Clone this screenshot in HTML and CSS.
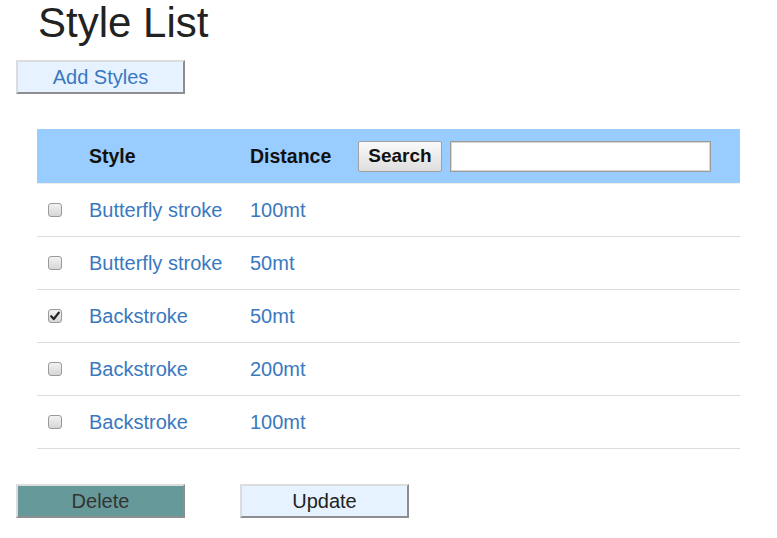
FILE: index.html
```html
<!DOCTYPE html>
<html>
<head>
<meta charset="utf-8">
<link rel="stylesheet" href="styles.css">
</head>
<body>
<div class="page">
  <h1 class="title">Style List</h1>
  <button class="btn btn-light add-btn">Add Styles</button>

  <div class="table">
    <div class="row head">
      <div class="cell"></div>
      <div class="cell">Style</div>
      <div class="cell">Distance</div>
      <div class="cell search-cell">
        <button class="search-btn">Search</button>
        <input class="search-input" type="text">
      </div>
    </div>
    <div class="row">
      <div class="cell"><span class="check"></span></div>
      <div class="cell link">Butterfly stroke</div>
      <div class="cell link">100mt</div>
      <div class="cell"></div>
    </div>
    <div class="row">
      <div class="cell"><span class="check"></span></div>
      <div class="cell link">Butterfly stroke</div>
      <div class="cell link">50mt</div>
      <div class="cell"></div>
    </div>
    <div class="row">
      <div class="cell"><span class="check checked"><svg viewBox="0 0 14 14" width="14" height="14"><path d="M3.2 7.2 L5.8 10 L10.8 3.6" fill="none" stroke="#222" stroke-width="2.2" stroke-linecap="round" stroke-linejoin="round"/></svg></span></div>
      <div class="cell link">Backstroke</div>
      <div class="cell link">50mt</div>
      <div class="cell"></div>
    </div>
    <div class="row">
      <div class="cell"><span class="check"></span></div>
      <div class="cell link">Backstroke</div>
      <div class="cell link">200mt</div>
      <div class="cell"></div>
    </div>
    <div class="row">
      <div class="cell"><span class="check"></span></div>
      <div class="cell link">Backstroke</div>
      <div class="cell link">100mt</div>
      <div class="cell"></div>
    </div>
  </div>

  <div class="actions">
    <button class="btn btn-delete">Delete</button>
    <button class="btn btn-light btn-update">Update</button>
  </div>
</div>
</body>
</html>
```

FILE: styles.css
```css
html, body {
  margin: 0;
  padding: 0;
  background: #fff;
}

body {
  font-family: "Liberation Sans", Arial, sans-serif;
  color: #222;
}

.page {
  display: flex;
  flex-direction: column;
  align-items: flex-start;
  padding-left: 16px;
}

.title {
  margin: 0 0 0 22px;
  padding-top: 2px;
  font-size: 42px;
  line-height: 42px;
  font-weight: normal;
  color: #222;
}

.btn {
  font-family: "Liberation Sans", Arial, sans-serif;
  font-size: 20px;
  width: 169px;
  height: 34px;
  padding: 0;
  border-style: solid;
  border-width: 2px 2px 2px 2px;
  border-color: #dcdcdc #8e8e8e #8e8e8e #dcdcdc;
  border-radius: 0;
  cursor: pointer;
}

.btn-light {
  background: #e6f2ff;
}

.add-btn {
  margin-top: 16px;
  color: #3a78c0;
}

.table {
  margin-top: 35px;
  margin-left: 21px;
  width: 703px;
}

.row {
  display: grid;
  grid-template-columns: 52px 161px 108px 1fr;
  height: 52px;
  align-items: center;
  border-bottom: 1px solid #dddddd;
  font-size: 20px;
}

.row.head {
  height: 54px;
  background: #99ccff;
  border-bottom: 1px solid #eeeeee;
  font-weight: bold;
  font-size: 19.5px;
  color: #111;
}

.cell {
  display: flex;
  align-items: center;
  white-space: nowrap;
}

.link {
  color: #3a78c0;
}

.check {
  display: block;
  box-sizing: border-box;
  width: 14px;
  height: 14px;
  margin-left: 11px;
  border: 1px solid #9a9a9a;
  border-radius: 3px;
  background: linear-gradient(#f2f2f2, #d6d6d6);
}

.check svg {
  display: block;
  margin: -1px 0 0 -1px;
}

.search-cell {
  gap: 8px;
}

.search-btn {
  font-family: "Liberation Sans", Arial, sans-serif;
  font-weight: bold;
  font-size: 19px;
  color: #111;
  width: 84px;
  height: 31px;
  padding: 0;
  border: 1px solid #a0a0a0;
  border-radius: 2px;
  background: linear-gradient(#fafafa, #dedede);
}

.search-input {
  box-sizing: border-box;
  width: 261px;
  height: 31px;
  border: 1px solid #9c9c9c;
  box-shadow: inset 0 0 0 1px #d8d8d8;
  background: #fff;
  padding: 0 4px;
  outline: none;
}

.actions {
  display: flex;
  gap: 55px;
  margin-top: 35px;
}

.btn-delete {
  background: #669999;
  color: #333;
}

.btn-update {
  color: #222;
}
```
